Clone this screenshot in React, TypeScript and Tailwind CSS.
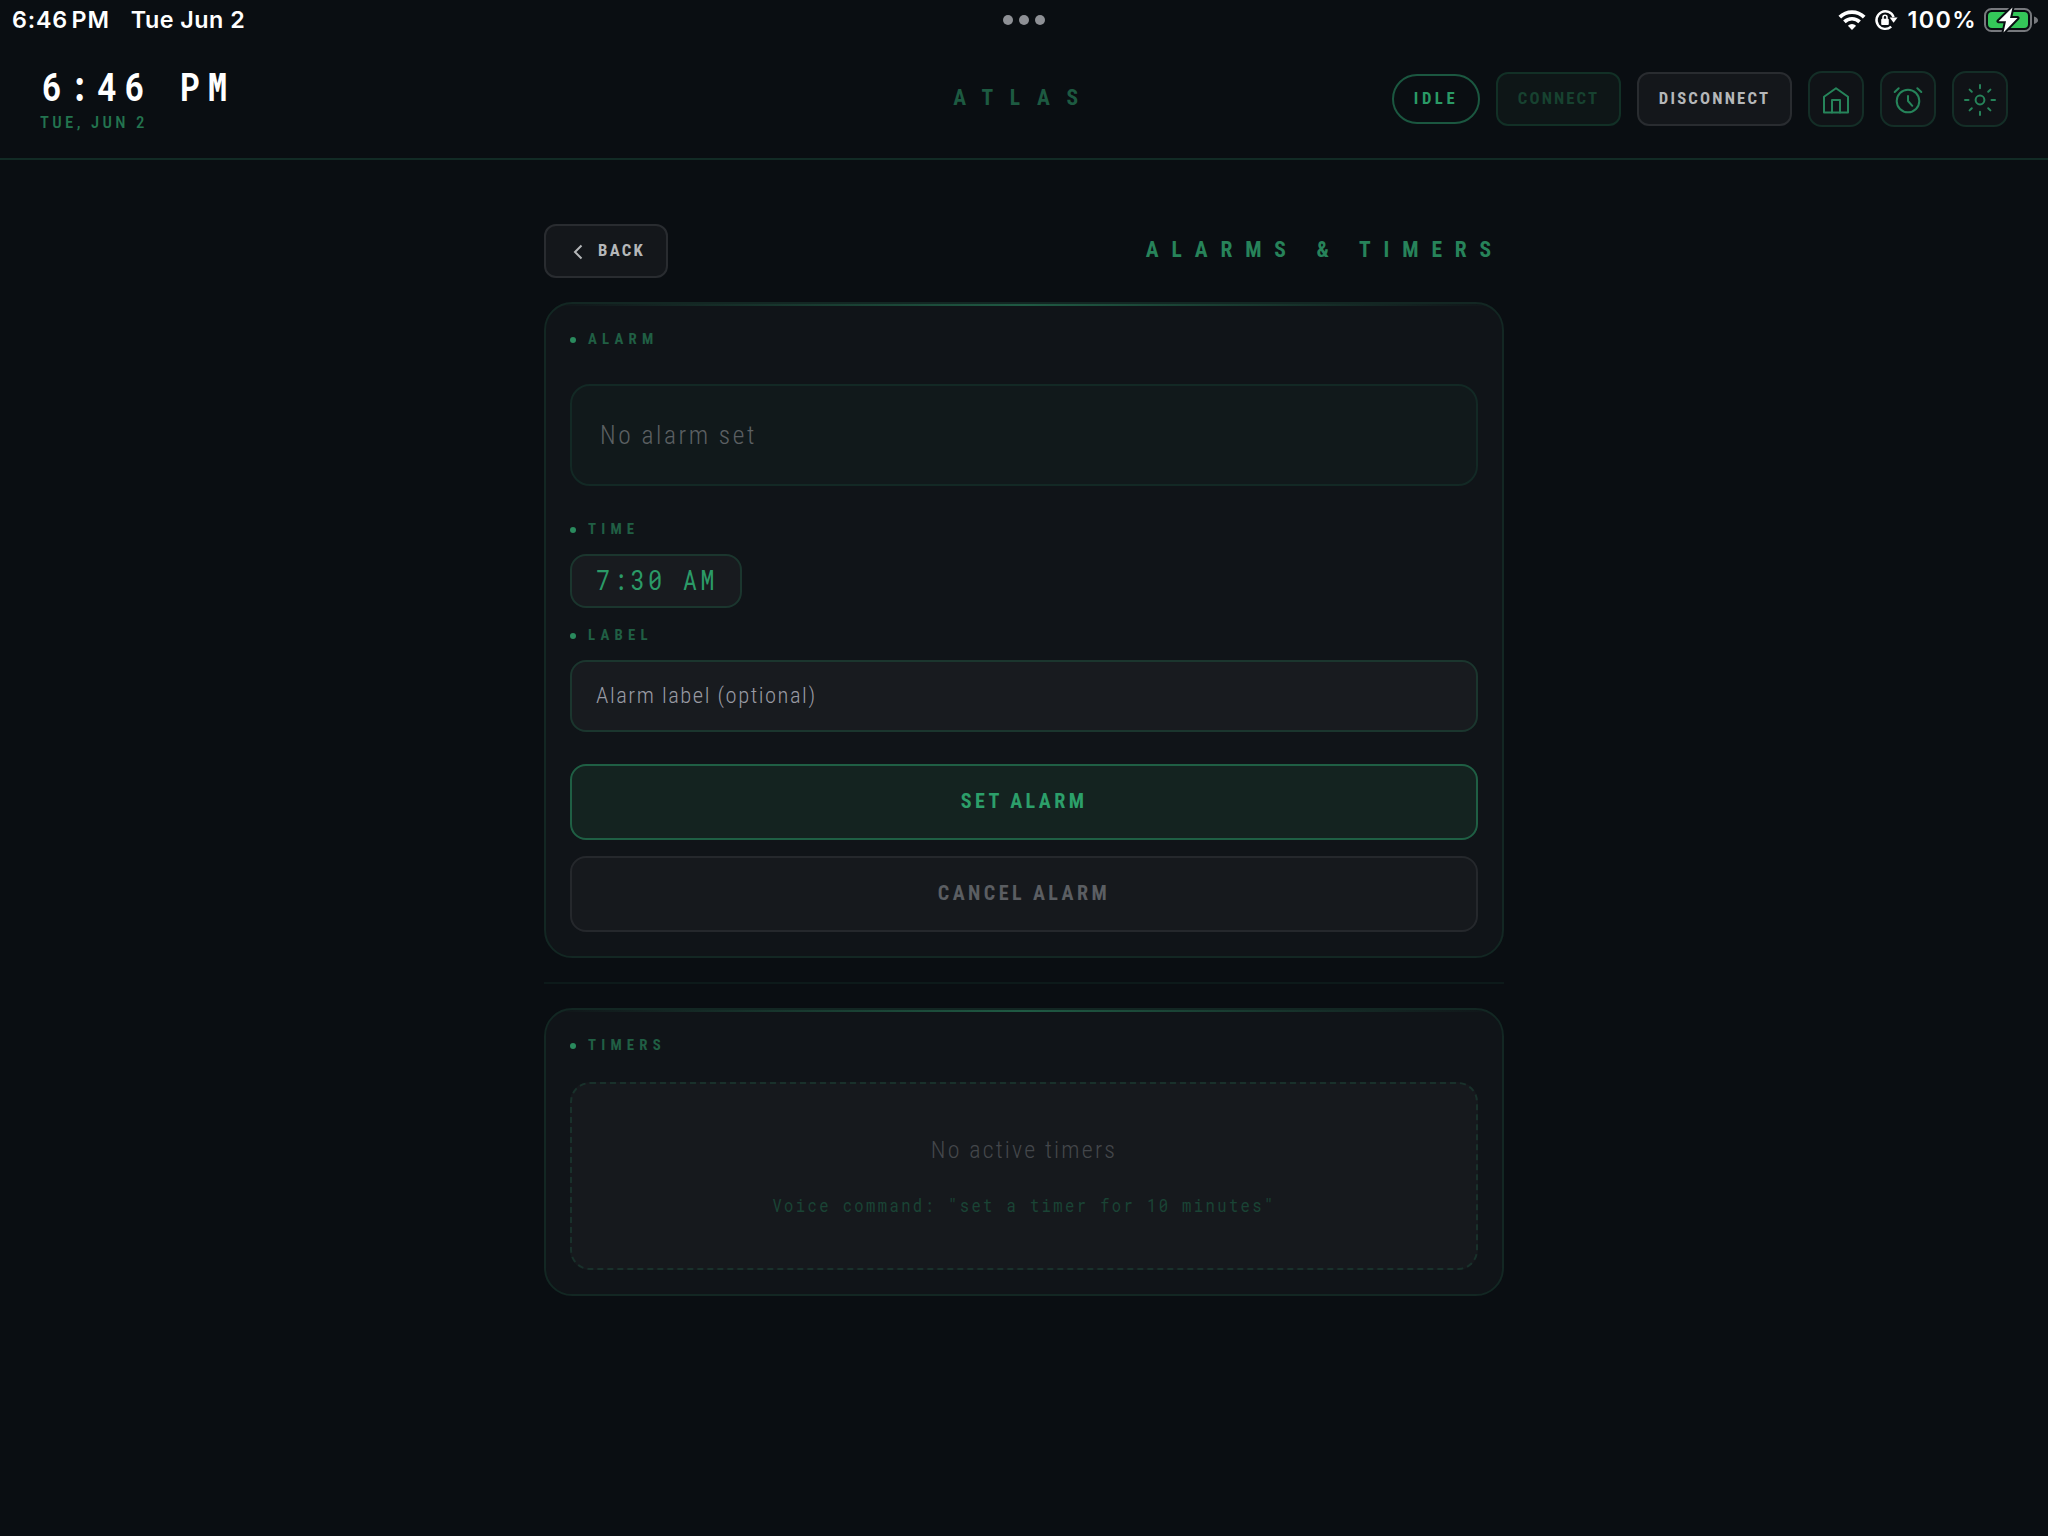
import type { ReactNode } from 'react';
import clsx from 'clsx';

const SANS = "font-['Roboto_Condensed','Roboto',sans-serif]";
const MONO = "font-['Roboto_Mono','DejaVu_Sans_Mono',monospace]";

function StatusBar() {
  return (
    <div className="grid h-10 grid-cols-[1fr_auto_1fr] items-center px-3 font-['Inter',sans-serif] text-[23.3px] leading-10 font-semibold text-white">
      <div className="flex gap-[21px] tracking-[0.5px]">
        <span className="tracking-[0.8px] [word-spacing:-3px]">6:46 PM</span>
        <span>Tue Jun 2</span>
      </div>
      <div className="flex gap-1.5">
        <span className="size-2.5 rounded-full bg-[#8e9095]" />
        <span className="size-2.5 rounded-full bg-[#8e9095]" />
        <span className="size-2.5 rounded-full bg-[#8e9095]" />
      </div>
      <div className="-mr-0.5 flex items-center justify-end">
        <svg className="mr-2 h-5 w-7" viewBox="0 0 28 20" fill="none">
          <path d="M1.8 7.1a17.3 17.3 0 0 1 24.4 0" stroke="white" strokeWidth="3.8" />
          <path d="M6.4 11.9a10.8 10.8 0 0 1 15.2 0" stroke="white" strokeWidth="3.6" />
          <path d="M14 20l-4.1-4.2a5.8 5.8 0 0 1 8.2 0z" fill="white" />
        </svg>
        <svg className="mr-[9px] h-[22px] w-6" viewBox="0 0 24 22" fill="none">
          <path d="M17.2 17.6A8.8 8.8 0 1 1 19.6 8.2" stroke="white" strokeWidth="2.4" />
          <path d="M15.6 8.6h8l-4 5.2z" fill="white" />
          <rect x="7.2" y="9.8" width="7.6" height="6.2" rx="1" fill="white" />
          <path d="M9 10V8.2a2 2 0 0 1 4 0V10" stroke="white" strokeWidth="1.6" />
        </svg>
        <span className="mr-[7px] tracking-[1.4px]">100%</span>
        <svg className="h-[26px] w-[54px]" viewBox="0 0 54 26" fill="none">
          <rect x="1" y="2" width="46" height="22" rx="6.5" stroke="#77797d" strokeWidth="2" />
          <path d="M50 9.4c3 1 4 2.2 4 3.8s-1 2.8-4 3.8z" fill="#77797d" />
          <rect x="4" y="5" width="40" height="16" rx="4" fill="#34c759" />
          <path
            d="M28.5 0.5L14.5 14.2h7.5L19.5 25.5L33.5 11h-7.5z"
            fill="white"
            stroke="#0a0e12"
            strokeWidth="4"
            strokeLinejoin="round"
            paintOrder="stroke"
          />
        </svg>
      </div>
    </div>
  );
}

function IconButton({ children }: { children: ReactNode }) {
  return (
    <button className="size-14 rounded-[14px] border-2 border-[#142e27] bg-[#101317] text-[#26845a]">
      <svg
        className="size-[52px]"
        viewBox="2 2 52 52"
        fill="none"
        stroke="currentColor"
        strokeWidth="2"
        strokeLinecap="round"
        strokeLinejoin="round"
      >
        {children}
      </svg>
    </button>
  );
}

function Header() {
  return (
    <header className="grid h-[120px] grid-cols-[1fr_auto_1fr] items-center border-b-2 border-[#122b25] px-10">
      <div className="flex flex-col items-start">
        <span
          className={clsx(MONO, '-mt-px ml-0.5 inline-block origin-left scale-x-85 text-[38.9px] leading-12 font-bold tracking-[9.1px] whitespace-pre text-white')}
        >
          6:46 PM
        </span>
        <span className={clsx(SANS, 'mt-px text-[16.7px] leading-6 font-medium tracking-[3.36px] text-[#23744f]')}>
          TUE, JUN 2
        </span>
      </div>
      <h1 className={clsx(SANS, 'pb-0.5 text-[21.5px] font-bold tracking-[16.7px] text-[#1d5a41]')}>ATLAS</h1>
      <div className={clsx(SANS, 'flex items-center justify-end gap-4 text-[16.7px] font-bold')}>
        <span className="flex h-[50px] w-[88px] items-center justify-center rounded-full border-2 border-[#1b5740] tracking-[3.54px] text-[#2a9a66]">
          IDLE
        </span>
        <button className="h-[54px] w-[125px] rounded-xl border-2 border-[#123026] bg-[#0e1617] tracking-[2.11px] text-[#174230]">
          CONNECT
        </button>
        <button className="h-[54px] w-[155px] rounded-xl border-2 border-[#292c30] bg-[#14171b] tracking-[2.19px] text-[#b5b7b9]">
          DISCONNECT
        </button>
        <IconButton>
          <path d="M16 41.5V25.8L28 17.2l12 8.6v15.7z" />
          <path d="M24 41.5V29h8v12.5" />
        </IconButton>
        <IconButton>
          <circle cx="28" cy="30" r="11.3" />
          <path d="M28 25v5l4.3 4.8M14.7 21l4-3.8M41.3 21l-4-3.8" />
        </IconButton>
        <IconButton>
          <circle cx="28" cy="29" r="4.4" />
          <path d="M28 14v3.2M28 40.8V44M13 29h3.5M39.5 29H43M17.6 18.6l2.2 2.2M36.2 37.2l2.2 2.2M38.4 18.6l-2.2 2.2M19.8 37.2l-2.2 2.2" />
        </IconButton>
      </div>
    </header>
  );
}

function SectionLabel({ children }: { children: ReactNode }) {
  return (
    <div className="flex h-6 items-center gap-3">
      <span className="size-1.5 rounded-full bg-[#2a8a5d]" />
      <span className={clsx(SANS, 'pb-0.5 text-[14.8px] leading-none font-bold tracking-[5.2px] text-[#205f44]')}>
        {children}
      </span>
    </div>
  );
}

function Card({ children }: { children: ReactNode }) {
  return (
    <section className="relative overflow-hidden rounded-[28px] border-2 border-[#132723] bg-[#101418] p-6">
      <div className="absolute inset-x-0 top-0 h-0.5 bg-linear-to-r from-transparent via-[#1f5a43] to-transparent" />
      {children}
    </section>
  );
}

export default function App() {
  return (
    <div className="h-[1536px] w-[2048px] overflow-hidden bg-[#0a0e12]">
      <StatusBar />
      <Header />

      <main className="mx-auto w-[960px] pt-16">
        <div className="flex h-[54px] items-center justify-between">
          <button
            className={clsx(
              SANS,
              'flex h-[54px] w-[124px] items-center rounded-xl border-2 border-[#292c30] bg-[#14171b] pl-[27px] text-[16.7px] font-bold tracking-[2.3px] text-[#b5b7b9]',
            )}
          >
            <svg className="mt-0.5 mr-[15px] h-4 w-2.5" viewBox="0 0 10 16" fill="none" stroke="currentColor" strokeWidth="2">
              <path d="M8.5 1.5L2 8l6.5 6.5" />
            </svg>
            BACK
          </button>
          <h2 className={clsx(SANS, 'pb-px text-[21.5px] font-bold tracking-[12.85px] text-[#27835a]')}>
            ALARMS &amp; TIMERS
          </h2>
        </div>

        <div className="mt-6">
          <Card>
            <SectionLabel>ALARM</SectionLabel>
            <div
              className={clsx(
                SANS,
                'mt-8 flex h-[102px] items-center rounded-[20px] border-2 border-[#132925] bg-[#11191b] px-7 text-[25.4px] font-light tracking-[2.55px] text-[#5c6063]',
              )}
            >
              No alarm set
            </div>

            <div className="mt-8">
              <SectionLabel>TIME</SectionLabel>
            </div>
            <div className="mt-3 flex h-[54px] w-[172px] items-center rounded-2xl border-2 border-[#1b362e] bg-[#181b1f] px-6 pb-0.5">
              <span
                className={clsx(MONO, 'inline-block origin-left scale-x-85 text-[27.8px] leading-10 tracking-[3.75px] whitespace-pre text-[#2b9a67]')}
              >
                7:30 AM
              </span>
            </div>

            <div className="mt-4">
              <SectionLabel>LABEL</SectionLabel>
            </div>
            <div
              className={clsx(
                SANS,
                'mt-3 flex h-[72px] items-center rounded-2xl border-2 border-[#1b362e] bg-[#181b1f] px-6 text-[22.5px] font-light tracking-[1.53px] text-[#989aa3]',
              )}
            >
              Alarm label (optional)
            </div>

            <div className={clsx(SANS, 'mt-8 flex flex-col gap-4 text-[20.1px] font-bold tracking-[3.4px]')}>
              <button className="h-[76px] rounded-2xl border-2 border-[#1f5f44] bg-[#142320] pb-0.5 text-[#2c9f6a]">
                SET ALARM
              </button>
              <button className="h-[76px] rounded-2xl border-2 border-[#25282c] bg-[#16191d] pb-0.5 text-[#5b5e62]">
                CANCEL ALARM
              </button>
            </div>
          </Card>
        </div>

        <div className="my-6 h-0.5 bg-[#0d1a1a]" />

        <Card>
          <SectionLabel>TIMERS</SectionLabel>
          <div className="mt-6 flex h-[188px] flex-col items-center gap-[27px] rounded-[20px] border-2 border-dashed border-[#19312b] bg-[#16191d] pt-[50px]">
            <p className={clsx(SANS, 'text-[23.9px] leading-8 font-light tracking-[2.2px] text-[#44474b]')}>
              No active timers
            </p>
            <p
              className={clsx(MONO, 'inline-block scale-x-85 text-[18.3px] leading-6 tracking-[2.8px] whitespace-pre text-[#1a4435]')}
            >
              Voice command: "set a timer for 10 minutes"
            </p>
          </div>
        </Card>
      </main>
    </div>
  );
}
